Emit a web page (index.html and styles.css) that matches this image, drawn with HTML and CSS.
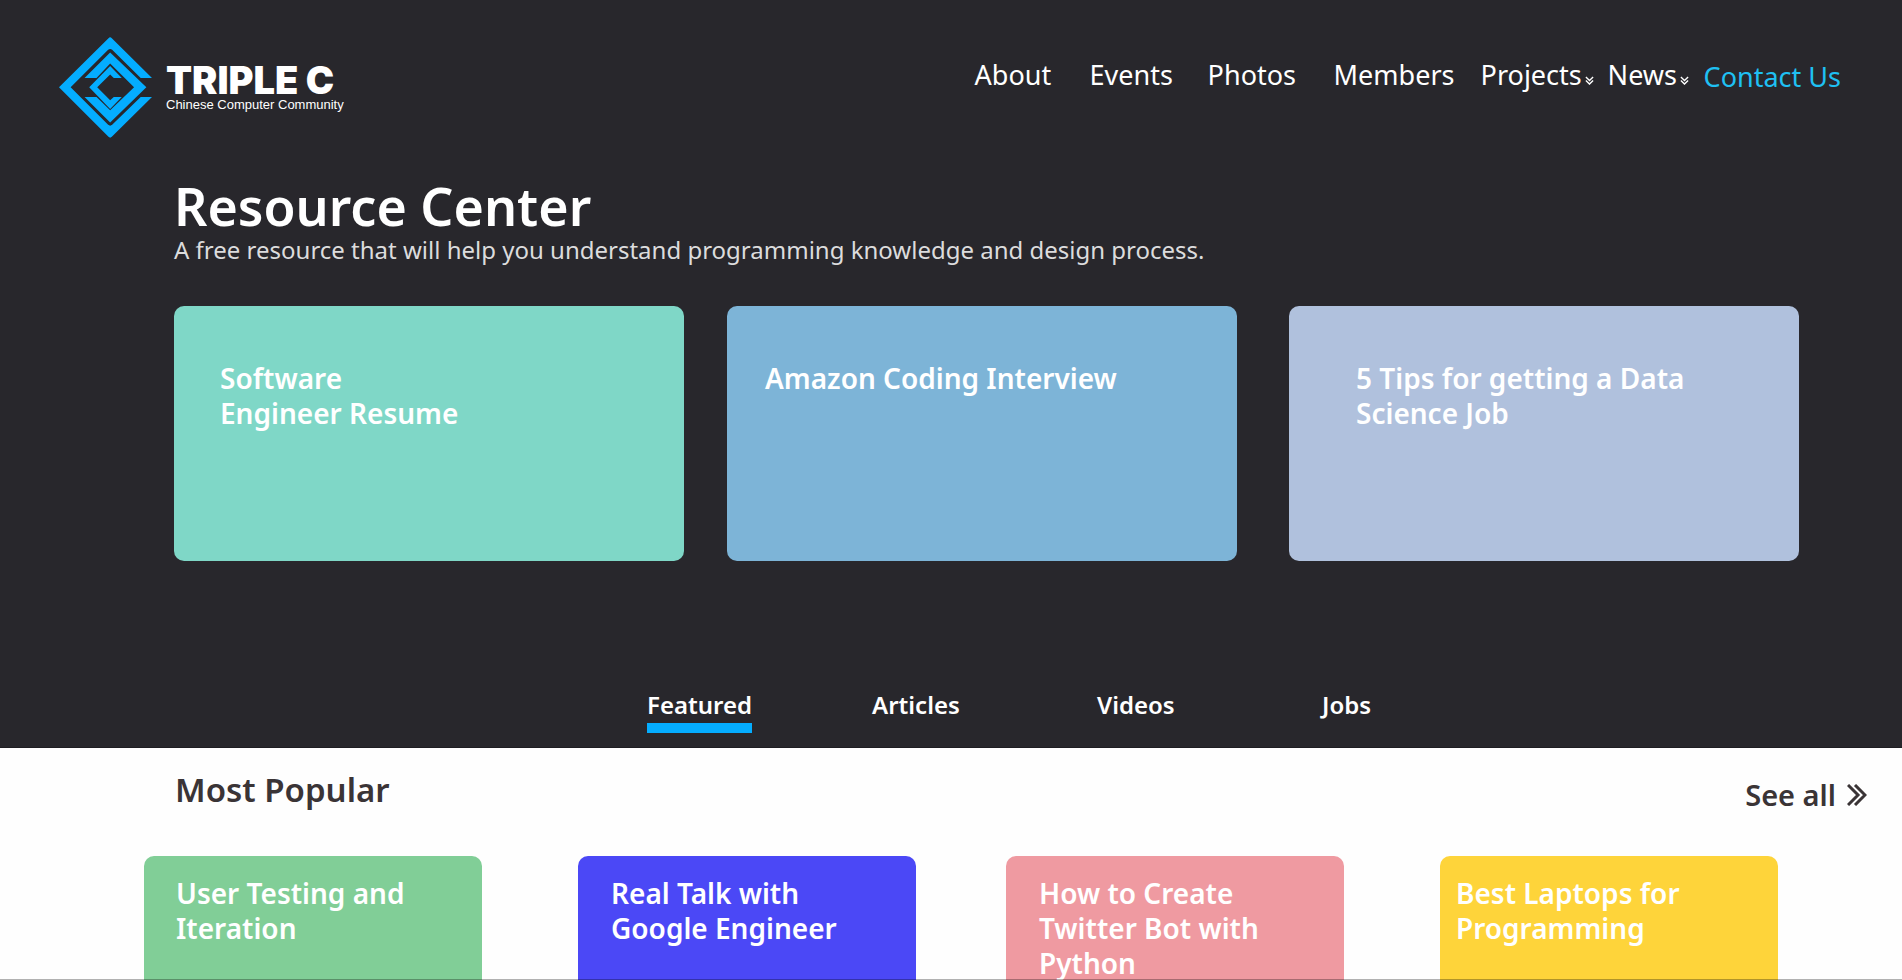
FILE: index.html
```html
<!DOCTYPE html>
<html lang="en">
<head>
<meta charset="utf-8">
<meta name="viewport" content="width=device-width, initial-scale=1">
<title>Triple C - Resource Center</title>
<link rel="stylesheet" href="styles.css">
</head>
<body>
<div class="page">
  <div class="hero">
    <header class="header">
      <a class="logo" href="#">
        <svg class="logo-mark" viewBox="57 51 280 303" aria-hidden="true">
          <path d="M206 54Q211 49 216 54L337 174H303L217 89Q211 84 205 89L92 202L205 315Q211 320 217 315L303 231H337L216 351Q211 356 206 351L57 202Z"/>
          <path d="M211 97L320 202L211 308L134 231H170L211 271L283 202L211 130L170 174H134Z"/>
          <path d="M211 138L246 174H222L211 163L172 202L211 241L222 231H246L211 267L148 202Z"/>
        </svg>
        <span class="logo-text">
          <span class="logo-name">TRIPLE C</span>
          <span class="logo-tag">Chinese Computer Community</span>
        </span>
      </a>
      <nav class="nav">
        <a href="#">About</a>
        <a href="#">Events</a>
        <a href="#">Photos</a>
        <a href="#">Members</a>
        <a href="#">Projects<svg class="nav-chevron" viewBox="0 0 10 10" aria-hidden="true"><path d="M1 1L5 5L9 1M1 5L5 9L9 5"/></svg></a>
        <a href="#">News<svg class="nav-chevron" viewBox="0 0 10 10" aria-hidden="true"><path d="M1 1L5 5L9 1M1 5L5 9L9 5"/></svg></a>
        <a class="nav-contact" href="#">Contact Us</a>
      </nav>
    </header>
    <section class="intro">
      <h1 class="title">Resource Center</h1>
      <p class="subtitle">A free resource that will help you understand programming knowledge and design process.</p>
    </section>
    <section class="featured">
      <a class="card card-mint" href="#">Software<br>Engineer Resume</a>
      <a class="card card-blue" href="#">Amazon Coding Interview</a>
      <a class="card card-lavender" href="#">5 Tips for getting a Data<br>Science Job</a>
    </section>
    <nav class="tabs">
      <a class="tab tab-active" href="#">Featured</a>
      <a class="tab" href="#">Articles</a>
      <a class="tab" href="#">Videos</a>
      <a class="tab" href="#">Jobs</a>
    </nav>
  </div>
  <main class="popular">
    <div class="popular-head">
      <h2 class="popular-title">Most Popular</h2>
      <a class="see-all" href="#">See all<svg class="see-chevron" viewBox="0 0 20 22" aria-hidden="true"><path d="M1 1L11 11L1 21M8 1L18 11L8 21"/></svg></a>
    </div>
    <div class="posts">
      <a class="post post-green" href="#">User Testing and<br>Iteration</a>
      <a class="post post-indigo" href="#">Real Talk with<br>Google Engineer</a>
      <a class="post post-pink" href="#">How to Create<br>Twitter Bot with<br>Python</a>
      <a class="post post-yellow" href="#">Best Laptops for<br>Programming</a>
    </div>
  </main>
</div>
</body>
</html>
```
FILE: styles.css
```css
* { box-sizing: border-box; }
body {
  margin: 0;
  font-family: "Noto Sans", "Open Sans", sans-serif;
  color: #fff;
  background: #fefefe;
}
a { color: inherit; text-decoration: none; }
.page {
  display: flex;
  flex-direction: column;
  min-height: 100vh;
}
.page::after {
  content: "";
  position: fixed;
  inset: auto 0 0;
  height: 1px;
  background: rgba(0, 0, 0, 0.3);
}
.hero { background: #28272c; border-bottom: 1px solid #1e1d22; }
.header {
  display: flex;
  justify-content: space-between;
  padding: 37px 61px 0 59px;
}
.logo { display: flex; gap: 14px; }
.logo-mark { width: 93px; height: 101px; fill: #04adff; }
.logo-text {
  display: flex;
  flex-direction: column;
  padding-top: 25px;
  font-family: "Liberation Sans", Arial, sans-serif;
}
.logo-name {
  font-family: Inter, "Liberation Sans", sans-serif;
  font-size: 38px;
  line-height: 36px;
  font-weight: 900;
}
.logo-tag { font-size: 13px; line-height: 14px; }
.nav {
  display: grid;
  grid-template-columns: 115px 118px 126px 147px 127px 96px auto;
  align-items: start;
  padding-top: 19px;
  font-size: 27px;
  line-height: 38px;
  white-space: nowrap;
}
.nav-chevron {
  width: 9px;
  height: 9px;
  margin-left: 3px;
  fill: none;
  stroke: #fff;
  stroke-width: 1.5;
}
.nav-contact { padding-top: 2px; color: #1fc0f3; }
.intro { padding: 37px 103px 0 174px; }
.title {
  margin: 0;
  font-size: 52px;
  line-height: 62px;
  font-weight: 600;
}
.subtitle {
  margin: 0;
  font-size: 24px;
  line-height: 26px;
  color: #dcdcdd;
}
.featured {
  display: grid;
  grid-template-columns: 510fr 43fr 510fr 52fr 510fr;
  padding: 43px 103px 0 174px;
}
.card {
  min-height: 255px;
  padding: 55px 20px 0 46px;
  border-radius: 10px;
  font-size: 28px;
  line-height: 35px;
  font-weight: 600;
}
.card-mint { background: #7fd7c7; }
.card-blue { grid-column: 3; padding-left: 38px; background: #7db4d7; }
.card-lavender { grid-column: 5; padding-left: 67px; background: #b0c1dd; }
.tabs {
  display: grid;
  grid-template-columns: repeat(4, 225px);
  justify-content: center;
  justify-items: start;
  padding: 126px 0 14px 292px;
  font-size: 24px;
  line-height: 36px;
  font-weight: 600;
}
.tab { border-bottom: 10px solid transparent; }
.tab-active { border-color: #04adff; }
.popular {
  display: flex;
  flex: 1;
  flex-direction: column;
}
.popular-head {
  display: flex;
  justify-content: space-between;
  padding: 18px 35px 0 175px;
  color: #3a3436;
}
.popular-title {
  margin: 0;
  font-size: 33px;
  line-height: 48px;
  font-weight: 600;
}
.see-all {
  display: flex;
  align-items: center;
  gap: 11px;
  padding-top: 10px;
  font-size: 29px;
  line-height: 38px;
  font-weight: 600;
}
.see-chevron {
  width: 20px;
  height: 22px;
  fill: none;
  stroke: #3a3436;
  stroke-width: 3;
}
.posts {
  display: grid;
  flex: 1;
  grid-template-columns: 338fr 96fr 338fr 90fr 338fr 96fr 338fr;
  padding: 42px 124px 0 144px;
}
.post {
  padding: 20px 0 0 33px;
  border-radius: 10px 10px 0 0;
  font-size: 28px;
  line-height: 35px;
  font-weight: 600;
}
.post-green { padding-left: 32px; background: #81ce97; }
.post-indigo { grid-column: 3; background: #4b48f6; }
.post-pink { grid-column: 5; background: #ef9aa1; }
.post-yellow { grid-column: 7; padding-left: 16px; background: #fed43a; }
```
